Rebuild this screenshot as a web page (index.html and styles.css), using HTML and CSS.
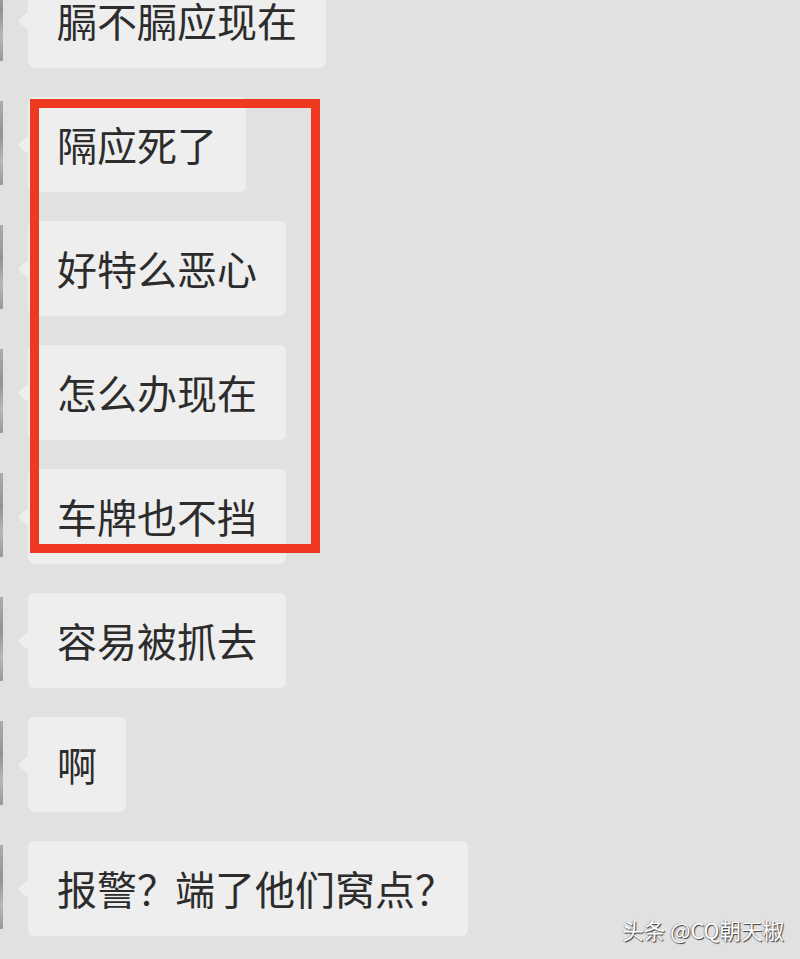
FILE: index.html
```html
<!DOCTYPE html>
<html lang="zh-CN">
<head>
<meta charset="utf-8">
<link rel="stylesheet" href="styles.css">
</head>
<body>
<div class="screen">
  <div class="chat">
    <div class="row"><div class="avatar-edge"></div><div class="bubble">膈不膈应现在</div></div>
    <div class="row"><div class="avatar-edge"></div><div class="bubble">隔应死了</div></div>
    <div class="row"><div class="avatar-edge"></div><div class="bubble">好特么恶心</div></div>
    <div class="row"><div class="avatar-edge"></div><div class="bubble">怎么办现在</div></div>
    <div class="row"><div class="avatar-edge"></div><div class="bubble">车牌也不挡</div></div>
    <div class="row"><div class="avatar-edge"></div><div class="bubble">容易被抓去</div></div>
    <div class="row"><div class="avatar-edge"></div><div class="bubble">啊</div></div>
    <div class="row"><div class="avatar-edge"></div><div class="bubble">报警<span class="punct-mid">？</span>端了他们窝点<span class="punct-end">？</span></div></div>
  </div>
  <div class="highlight"></div>
  <div class="watermark">头条 @CQ朝天椒</div>
</div>
</body>
</html>
```
FILE: styles.css
```css
html, body {
  margin: 0;
  padding: 0;
  background: #e1e1e1;
}
.screen {
  position: relative;
  width: 800px;
  height: 959px;
  overflow: hidden;
  font-family: "Noto Sans CJK SC", "Noto Sans", sans-serif;
}
.chat {
  display: flex;
  flex-direction: column;
  gap: 29px;
  margin-top: -27px;
}
.row {
  display: flex;
  align-items: flex-start;
}
.avatar-edge {
  width: 3px;
  height: 84px;
  margin-top: 4px;
  background: linear-gradient(#8a8a8a, #5e5e5e 40%, #9a9a9a 70%, #6a6a6a);
  opacity: 0.6;
}
.bubble {
  position: relative;
  margin-left: 25px;
  padding: 20px 29px;
  line-height: 55px;
  font-size: 40px;
  font-weight: 400;
  color: #2c2c2c;
  background: #eeeeee;
  border-radius: 6px;
  white-space: nowrap;
}
.bubble::before {
  content: "";
  position: absolute;
  left: -10px;
  top: 50%;
  margin-top: -9px;
  border-style: solid;
  border-width: 9px 10px 9px 0;
  border-color: transparent #eeeeee transparent transparent;
}
.punct-mid {
  letter-spacing: -2px;
}
.punct-end {
  letter-spacing: -16px;
}
.highlight {
  position: absolute;
  left: 30px;
  top: 99px;
  width: 272px;
  height: 436px;
  border: 9px solid #ee3820;
}
.watermark {
  position: absolute;
  right: 16px;
  top: 915px;
  font-size: 21.5px;
  line-height: 30px;
  color: #ffffff;
  text-shadow: 1px 1px 1px rgba(0, 0, 0, 0.75), -1px 0 1px rgba(0, 0, 0, 0.3);
  font-family: "Noto Sans CJK SC", "Noto Sans", sans-serif;
}
```
